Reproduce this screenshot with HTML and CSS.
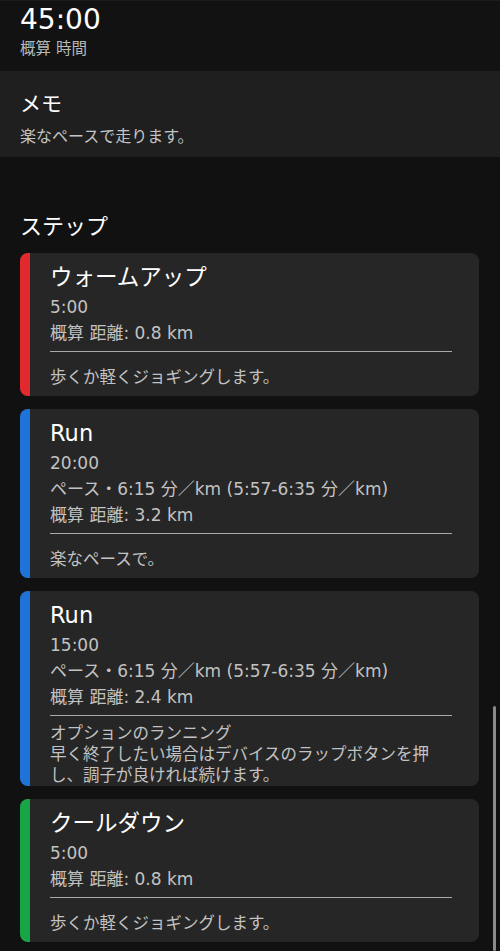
FILE: index.html
```html
<!DOCTYPE html>
<html lang="ja">
<head>
<meta charset="utf-8">
<title>ワークアウト</title>
<link rel="stylesheet" href="styles.css">
</head>
<body>
<div class="page">
  <section class="summary">
    <div class="summary-time">45:00</div>
    <div class="summary-label">概算 時間</div>
  </section>
  <section class="memo">
    <h2 class="memo-title">メモ</h2>
    <p class="memo-text">楽なペースで走ります。</p>
  </section>
  <section class="steps">
    <h2 class="steps-title">ステップ</h2>
    <div class="step step-warmup">
      <div class="step-bar"></div>
      <div class="step-body">
        <div class="step-name">ウォームアップ</div>
        <div class="step-meta">5:00</div>
        <div class="step-meta">概算 距離: 0.8 km</div>
        <div class="step-divider"></div>
        <div class="step-note">歩くか軽くジョギングします。</div>
      </div>
    </div>
    <div class="step step-run">
      <div class="step-bar"></div>
      <div class="step-body">
        <div class="step-name">Run</div>
        <div class="step-meta">20:00</div>
        <div class="step-meta">ペース・6:15 分／km (5:57-6:35 分／km)</div>
        <div class="step-meta">概算 距離: 3.2 km</div>
        <div class="step-divider"></div>
        <div class="step-note">楽なペースで。</div>
      </div>
    </div>
    <div class="step step-run">
      <div class="step-bar"></div>
      <div class="step-body">
        <div class="step-name">Run</div>
        <div class="step-meta">15:00</div>
        <div class="step-meta">ペース・6:15 分／km (5:57-6:35 分／km)</div>
        <div class="step-meta">概算 距離: 2.4 km</div>
        <div class="step-divider"></div>
        <div class="step-note step-note-multi">オプションのランニング
早く終了したい場合はデバイスのラップボタンを押し、調子が良ければ続けます。</div>
      </div>
    </div>
    <div class="step step-cooldown">
      <div class="step-bar"></div>
      <div class="step-body">
        <div class="step-name">クールダウン</div>
        <div class="step-meta">5:00</div>
        <div class="step-meta">概算 距離: 0.8 km</div>
        <div class="step-divider"></div>
        <div class="step-note">歩くか軽くジョギングします。</div>
      </div>
    </div>
  </section>
</div>
<div class="scrollbar"></div>
</body>
</html>
```
FILE: styles.css
```css
html, body {
  margin: 0;
  padding: 0;
  background: #111111;
  height: 951px;
  overflow: hidden;
}
body {
  font-family: "DejaVu Sans", "Noto Sans CJK JP", sans-serif;
  color: #ffffff;
}
.page {
  display: flex;
  flex-direction: column;
}
.summary {
  background: #121212;
  height: 71px;
  padding: 0 20px;
  box-sizing: border-box;
  border-top: 1px solid #1c1c1c;
}
.summary-time {
  font-size: 28px;
  line-height: 36px;
  margin-top: 1px;
  color: #ffffff;
}
.summary-label {
  font-size: 15.5px;
  line-height: 22px;
  color: #b8b8b8;
}
.memo {
  background: #1f1f1f;
  height: 86px;
  padding: 18px 20px 0;
  box-sizing: border-box;
}
.memo-title {
  margin: 0;
  font-weight: normal;
  font-size: 21px;
  line-height: 30px;
}
.memo-text {
  margin: 6px 0 0;
  font-size: 16px;
  line-height: 24px;
  color: #c4c4c4;
}
.steps {
  padding: 55px 20px 0;
  display: flex;
  flex-direction: column;
  gap: 13px;
}
.steps-title {
  margin: 0 0 -2px;
  font-weight: normal;
  font-size: 22px;
  line-height: 30px;
}
.step {
  display: flex;
  background: #262626;
  border-radius: 8px;
  overflow: hidden;
  width: 459px;
}
.step-bar {
  width: 10px;
  flex: none;
}
.step-warmup .step-bar { background: #e2292e; }
.step-run .step-bar { background: #1d73d8; }
.step-cooldown .step-bar { background: #17a548; }
.step-body {
  flex: 1;
  padding: 7px 27px 5px 20px;
}
.step-name {
  font-size: 22.5px;
  line-height: 34px;
  color: #ffffff;
}
.step-meta {
  font-size: 17px;
  line-height: 26px;
  color: #c2c2c2;
  white-space: nowrap;
}
.step-divider {
  height: 1px;
  background: #a9a9a9;
  margin-top: 5px;
}
.step-note {
  margin-top: 13px;
  font-size: 16.5px;
  line-height: 26px;
  color: #c2c2c2;
}
.step-note-multi {
  margin-top: 7px;
  margin-bottom: -5px;
  line-height: 21px;
  white-space: pre-line;
}
.scrollbar {
  position: fixed;
  right: 4px;
  top: 706px;
  width: 3px;
  height: 245px;
  background: #8a8a8a;
  border-radius: 2px;
}
```
